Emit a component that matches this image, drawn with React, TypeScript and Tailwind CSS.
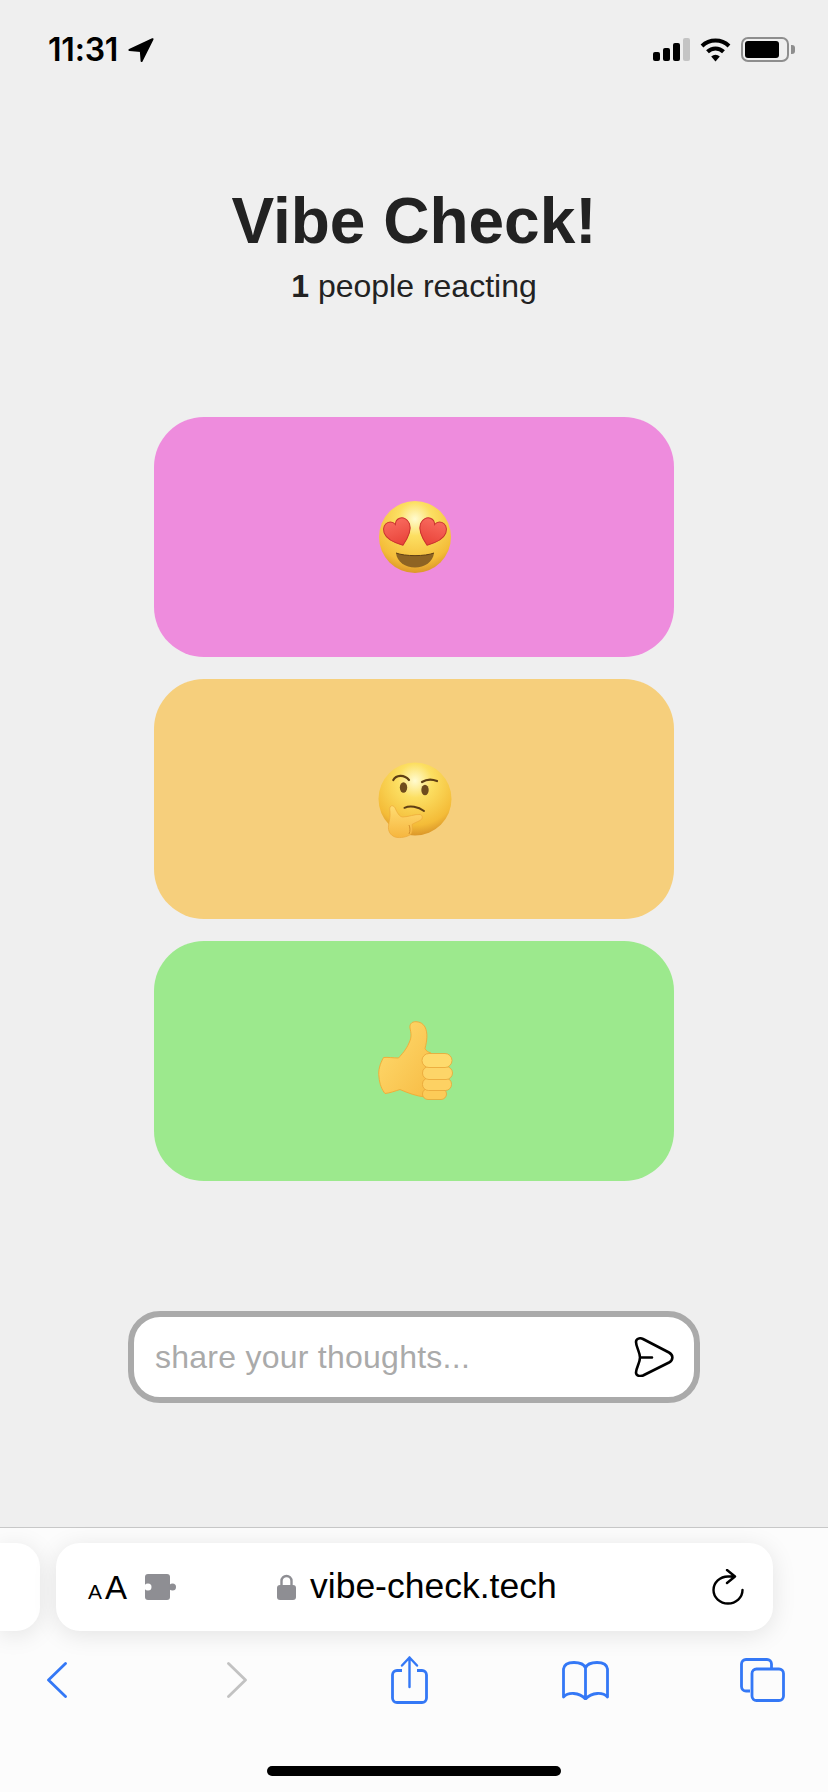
function LocationArrow() {
  return (
    <svg width="26" height="24" viewBox="0 0 26 24" className="ml-[10px]">
      <path d="M24.5 1.2 L1.5 12 L12.8 13 L13.6 23 Z" fill="#000" stroke="#000" strokeWidth="2" strokeLinejoin="round" />
    </svg>
  );
}

function StatusIcons() {
  return (
    <div className="flex items-center">
      <div className="flex items-end gap-[3px] h-[23px]">
        <div className="w-[7px] h-[9px] rounded-[2px] bg-black" />
        <div className="w-[7px] h-[13px] rounded-[2px] bg-black" />
        <div className="w-[7px] h-[18px] rounded-[2px] bg-black" />
        <div className="w-[7px] h-[23px] rounded-[2px] bg-[#c4c4c4]" />
      </div>
      <svg width="31" height="25" viewBox="0 0 31 25" className="ml-[10px]">
        <path d="M2 9 A19.5 19.5 0 0 1 29 9" fill="none" stroke="#000" strokeWidth="4" />
        <path d="M7.5 14.8 A11.5 11.5 0 0 1 23.5 14.8" fill="none" stroke="#000" strokeWidth="4" />
        <path d="M11.2 19.4 A6.4 6.4 0 0 1 19.8 19.4 L15.5 24.5 Z" fill="#000" />
      </svg>
      <div className="ml-[10px] w-[48px] h-[25px] rounded-[7px] border-2 border-[#8e8e8e] p-[2px]">
        <div className="w-[34px] h-full rounded-[3px] bg-black" />
      </div>
      <div className="ml-[2px] w-[4px] h-[9px] rounded-r-[3px] bg-[#8e8e8e]" />
    </div>
  );
}

function HeartEyes() {
  const heart =
    'M0 13 C-8.5 7 -13.5 1.5 -13.5 -5 C-13.5 -10.5 -9.5 -13.5 -6 -13.5 C-3.2 -13.5 -1 -11.8 0 -9 C1 -11.8 3.2 -13.5 6 -13.5 C9.5 -13.5 13.5 -10.5 13.5 -5 C13.5 1.5 8.5 7 0 13 Z';
  return (
    <svg width="80" height="80" viewBox="-1 0 80 80">
      <defs>
        <radialGradient id="faceA" cx="50%" cy="25%" r="78%">
          <stop offset="0%" stopColor="#fffbd0" />
          <stop offset="30%" stopColor="#fcdf62" />
          <stop offset="78%" stopColor="#f4bc38" />
          <stop offset="100%" stopColor="#d68f26" />
        </radialGradient>
        <linearGradient id="heartA" x1="0" y1="0" x2="0" y2="1">
          <stop offset="0%" stopColor="#f8695d" />
          <stop offset="100%" stopColor="#e84238" />
        </linearGradient>
      </defs>
      <circle cx="40" cy="40" r="36" fill="url(#faceA)" />
      <g transform="translate(23.5 36) rotate(-20)">
        <path d={heart} fill="url(#heartA)" stroke="#c9332f" strokeWidth="1" />
      </g>
      <g transform="translate(56.5 36) rotate(20)">
        <path d={heart} fill="url(#heartA)" stroke="#c9332f" strokeWidth="1" />
      </g>
      <path d="M21 56 C30 59.5 50 59.5 59 56 C58 65 49.5 70.5 40 70.5 C30.5 70.5 22 65 21 56 Z" fill="#8e6423" />
      <path d="M21 56 C30 59.5 50 59.5 59 56" fill="none" stroke="#5f3f14" strokeWidth="1" />
    </svg>
  );
}

function ThinkingFace() {
  return (
    <svg width="80" height="80" viewBox="-1 0 80 80">
      <defs>
        <radialGradient id="faceB" cx="50%" cy="25%" r="78%">
          <stop offset="0%" stopColor="#fffbd0" />
          <stop offset="30%" stopColor="#fcdf62" />
          <stop offset="78%" stopColor="#f4bc38" />
          <stop offset="100%" stopColor="#d68f26" />
        </radialGradient>
        <linearGradient id="handB" x1="0" y1="0" x2="0" y2="1">
          <stop offset="0%" stopColor="#ffdc72" />
          <stop offset="100%" stopColor="#f6b63f" />
        </linearGradient>
      </defs>
      <circle cx="40" cy="40" r="36.5" fill="url(#faceB)" />
      <ellipse cx="28.5" cy="28.5" rx="3.7" ry="5.2" fill="#6f4c1d" />
      <ellipse cx="50" cy="31" rx="3.7" ry="5.2" fill="#6f4c1d" />
      <path d="M18.3 21 C21 16 29 15 34 21" fill="none" stroke="#5f3f14" strokeWidth="2.2" strokeLinecap="round" />
      <path d="M47 23 C51 20.5 57 20 62 22" fill="none" stroke="#5f3f14" strokeWidth="2.2" strokeLinecap="round" />
      <path d="M29.5 48.8 C35 46.5 43 47.5 49 52" fill="none" stroke="#5f3f14" strokeWidth="2" strokeLinecap="round" />
      <path
        d="M16 47 C18 46 20 48 21 51 C23 55 25 58 28 58 C33 58 40 55 45 55.5 C48 56 48 60 45 61.5 C42 63 39 64 37 65.5 C37.5 69 37.5 73 36 75 C33 78 25 79.5 20 78 C15 76 13 72 13.5 67 C14 62 15.5 58 15 53 C14.5 50 14.5 48 16 47 Z"
        fill="url(#handB)"
        stroke="#eda93a"
        strokeWidth="0.7"
      />
      <path d="M34 66 C35 68 35.5 72 34 75" fill="none" stroke="#d4902c" strokeWidth="1" />
    </svg>
  );
}

function ThumbsUp() {
  return (
    <svg width="80" height="88" viewBox="-1 0 80 88">
      <defs>
        <linearGradient id="thumbC" x1="0" y1="0" x2="1" y2="1">
          <stop offset="0%" stopColor="#ffdc70" />
          <stop offset="100%" stopColor="#f7bc45" />
        </linearGradient>
      </defs>
      <path
        d="M41 4.7 C36 4.5 34.5 8 35 11 C36 16 37 20 34 26 C31 33 27 37 23.5 41 C18 41 13 40 8.5 40.5 C5 47 3 53 4 60 C4.5 67 7 73 10 76.5 C15 76 20 74 25 72.5 C33 76 41 79 50 80 L56 36 C53 35 51 34 50 31.5 C52 24 53 16 50 10 C48 6.5 45 4.8 41 4.7 Z"
        fill="url(#thumbC)"
        stroke="#f0ae3a"
        strokeWidth="1"
      />
      <rect x="47.5" y="71.5" width="24" height="11" rx="5.5" fill="#fccb58" stroke="#e8a436" strokeWidth="0.8" />
      <rect x="47.5" y="61" width="29" height="12.5" rx="6" fill="#fdd163" stroke="#e8a436" strokeWidth="0.8" />
      <rect x="47.5" y="49.5" width="30" height="13" rx="6.5" fill="#fdd568" stroke="#e8a436" strokeWidth="0.8" />
      <rect x="47" y="36.5" width="30" height="14" rx="7" fill="#feda6c" stroke="#e8a436" strokeWidth="0.8" />
    </svg>
  );
}

function ReactionCard({ color, children }: { color: string; children: React.ReactNode }) {
  return <button className={`w-[520px] h-[240px] rounded-[50px] flex items-center justify-center ${color}`}>{children}</button>;
}

function SendIcon() {
  return (
    <svg width="40" height="40" viewBox="0 0 40 40">
      <path
        d="M9 2 C6 0.5 2 1.5 2 5 C2 10 6 15 6 20.5 C6 26 2 31 2 35.5 C2 39 6 39.5 9 38.5 L35 25.5 C39.5 23 39.5 18 35 15.5 Z M6 20.5 H18"
        fill="none"
        stroke="#000"
        strokeWidth="2.6"
        strokeLinejoin="round"
        strokeLinecap="round"
      />
    </svg>
  );
}

function AddressBar() {
  return (
    <div className="flex gap-[16px] pt-[15px]">
      <div className="w-[40px] h-[88px] shrink-0 rounded-r-[24px] bg-white shadow-[0_4px_24px_rgba(0,0,0,0.1)]" />
      <div className="w-[717px] h-[88px] shrink-0 rounded-[24px] bg-white shadow-[0_4px_24px_rgba(0,0,0,0.1)] flex items-center pl-[32px] pr-[29px]">
        <div className="flex items-baseline font-['Liberation_Sans',sans-serif] text-black leading-none w-[39px] mt-[1px]">
          <span className="text-[21px]">A</span>
          <span className="text-[33px] ml-[3px]">A</span>
        </div>
        <svg width="31" height="26" viewBox="0 0 31 26" className="ml-[18px]">
          <rect x="0" y="0" width="25" height="26" rx="3" fill="#8e8e93" />
          <circle cx="27.5" cy="13" r="3.5" fill="#8e8e93" />
          <circle cx="3" cy="13" r="3.5" fill="#fff" />
        </svg>
        <div className="flex-1 flex items-center pl-[101px]">
          <svg width="19" height="26" viewBox="0 0 19 26">
            <path d="M4.5 12 V7 A5 5 0 0 1 14.5 7 V12" fill="none" stroke="#8e8e93" strokeWidth="2.4" />
            <rect x="0" y="11" width="19" height="15" rx="3" fill="#8e8e93" />
          </svg>
          <span className="ml-[14px] mb-[1px] font-['Liberation_Sans',sans-serif] text-[35.5px] leading-none text-black">vibe-check.tech</span>
        </div>
        <svg width="32" height="36" viewBox="0 0 32 36">
          <path d="M15 1 L23 7.5 L15 14 M23 7.5 H16 A14.5 13.5 0 1 0 30.5 21" fill="none" stroke="#000" strokeWidth="2.4" strokeLinejoin="round" strokeLinecap="round" />
        </svg>
      </div>
    </div>
  );
}

function NavBar() {
  return (
    <div className="flex justify-between items-center pl-[37px] pr-[46px] mt-[25px] h-[48px]">
      <div className="w-[40px] flex justify-center">
        <svg width="20" height="36" viewBox="0 0 20 36">
          <path d="M18.5 1.5 L1.5 18 L18.5 34.5" fill="none" stroke="#3478f6" strokeWidth="2.8" strokeLinecap="round" strokeLinejoin="round" />
        </svg>
      </div>
      <div className="w-[40px] flex justify-center pl-[8px]">
        <svg width="20" height="36" viewBox="0 0 20 36">
          <path d="M1.5 1.5 L18.5 18 L1.5 34.5" fill="none" stroke="#c2c2c2" strokeWidth="2.8" strokeLinecap="round" strokeLinejoin="round" />
        </svg>
      </div>
      <div className="w-[40px] flex justify-center">
        <svg width="37" height="48" viewBox="0 0 37 48">
          <path d="M11 14.5 H6 A4.5 4.5 0 0 0 1.5 19 V42 A4.5 4.5 0 0 0 6 46.5 H31 A4.5 4.5 0 0 0 35.5 42 V19 A4.5 4.5 0 0 0 31 14.5 H26" fill="none" stroke="#3478f6" strokeWidth="2.8" />
          <path d="M18.5 31 V1.5 M11 9.5 L18.5 1.5 L26 9.5" fill="none" stroke="#3478f6" strokeWidth="2.4" strokeLinecap="round" strokeLinejoin="round" />
        </svg>
      </div>
      <div className="w-[40px] flex justify-center">
        <svg width="47" height="39" viewBox="0 0 47 39" className="shrink-0">
          <path
            d="M23.5 7 C22 3 18 1.5 12 1.5 C5 1.5 2 4 1.5 8 V36 C6 31 17 31 23.5 38 C30 31 41 31 45.5 36 V8 C45 4 42 1.5 35 1.5 C29 1.5 25 3 23.5 7 V38"
            fill="none"
            stroke="#3478f6"
            strokeWidth="2.8"
            strokeLinejoin="round"
          />
        </svg>
      </div>
      <div className="w-[40px] flex justify-center">
        <svg width="45" height="44" viewBox="0 0 45 44" className="shrink-0">
          <path d="M10 33 H6 A4.5 4.5 0 0 1 1.5 28.5 V6 A4.5 4.5 0 0 1 6 1.5 H27 A4.5 4.5 0 0 1 31.5 6 V10" fill="none" stroke="#3478f6" strokeWidth="2.8" />
          <rect x="12" y="11" width="31.5" height="31.5" rx="4.5" fill="none" stroke="#3478f6" strokeWidth="2.8" />
        </svg>
      </div>
    </div>
  );
}

export default function App() {
  return (
    <div className="w-[828px] h-[1792px] overflow-hidden flex flex-col bg-[#efefef] font-['Liberation_Sans',sans-serif]">
      {/* Status bar */}
      <div className="flex justify-between items-start pt-[37px] pl-[48px] pr-[33px] h-[80px]">
        <div className="flex items-center">
          <span className="font-['Inter',sans-serif] font-semibold text-[32px] leading-[25px] tracking-[-0.2px] text-black">11:31</span>
          <LocationArrow />
        </div>
        <StatusIcons />
      </div>

      {/* Main */}
      <div className="flex-1 flex flex-col items-center">
        <h1 className="mt-[104px] text-[64px] leading-[74px] font-bold text-[#222]">Vibe Check!</h1>
        <p className="mt-[8px] text-[32px] leading-[40px] text-[#222]">
          <span className="font-bold">1</span> people reacting
        </p>
        <div className="mt-[111px] flex flex-col gap-[22px]">
          <ReactionCard color="bg-[#ee8cdd]">
            <HeartEyes />
          </ReactionCard>
          <ReactionCard color="bg-[#f6cf7c]">
            <ThinkingFace />
          </ReactionCard>
          <ReactionCard color="bg-[#9ce98d]">
            <ThumbsUp />
          </ReactionCard>
        </div>
        <div className="mt-[130px] w-[572px] h-[92px] rounded-[32px] border-[6px] border-[#aaaaaa] bg-white flex items-center pl-[21px] pr-[20px]">
          <input
            className="flex-1 min-w-0 outline-none bg-transparent text-[32px] tracking-[0.25px] text-[#222] placeholder:text-[#aaaaaa]"
            placeholder="share your thoughts..."
          />
          <SendIcon />
        </div>
      </div>

      {/* Safari toolbar */}
      <div className="h-[265px] border-t border-[#c8c8c8] bg-[#fcfcfc] flex flex-col">
        <AddressBar />
        <NavBar />
        <div className="mt-auto mb-[16px] mx-auto w-[294px] h-[10px] rounded-full bg-black" />
      </div>
    </div>
  );
}
